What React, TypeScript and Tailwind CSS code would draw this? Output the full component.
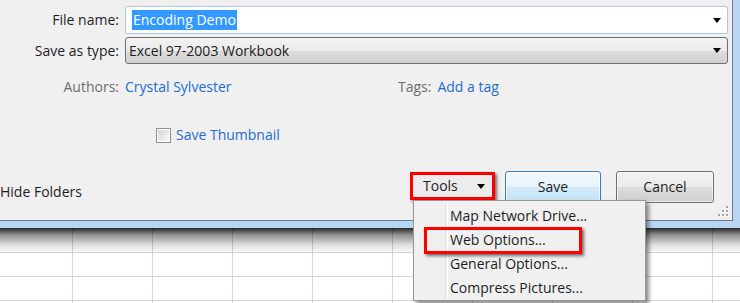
import React from "react";

const font = "font-['Open_Sans','Noto_Sans',sans-serif]";

function Arrow({ className = "" }: { className?: string }) {
  return (
    <svg width="8" height="5" viewBox="0 0 8 5" className={className}>
      <path d="M0 0h8L4 5z" fill="#000" />
    </svg>
  );
}

function Grip() {
  const dots = [
    [8, 0],
    [4, 4],
    [8, 4],
    [0, 8],
    [4, 8],
    [8, 8],
  ];
  return (
    <svg width="11" height="11" viewBox="0 0 11 11">
      {dots.map(([x, y], i) => (
        <g key={i}>
          <rect x={x + 1} y={y + 1} width="2" height="2" fill="#fff" />
          <rect x={x} y={y} width="2" height="2" fill="#a5a5a5" />
        </g>
      ))}
    </svg>
  );
}

const cols = [73, 80, 80, 80, 80, 80, 80, 80, 80, 80];
const rows = [25, 24, 24, 24];

export default function App() {
  return (
    <div className={`relative w-[740px] h-[303px] overflow-hidden bg-white text-[14px] leading-[20px] text-[#1e1e1e] ${font}`}>
      {/* Dialog */}
      <div className="h-[228px] bg-[#b9d7f4] pr-[7px] pb-[7px]">
        <div className="relative h-full bg-[#f0f0f0] border-r border-b border-[#6e7d8e] pt-[6px]">
          {/* file name + type */}
          <div className="grid grid-cols-[119px_603px] gap-x-[6px] gap-y-[3px]">
            <div className="flex h-[28px] items-center justify-end">File name:</div>
            <div className="flex h-[28px] items-center border border-[#abc9e6] bg-white pl-[6px] pr-[6px] rounded-[2px]">
              <span className="bg-[#3399ff] text-white px-[1px]">Encoding Demo</span>
              <Arrow className="ml-auto" />
            </div>
            <div className="flex h-[27px] items-center justify-end">Save as type:</div>
            <div className="flex h-[27px] items-center rounded-[3px] border border-[#707070] bg-[linear-gradient(#f2f2f2_0%,#ebebeb_50%,#dddddd_50%,#cfcfcf_100%)] pl-[3px] pr-[6px]">
              <span>Excel 97-2003 Workbook</span>
              <Arrow className="ml-auto" />
            </div>
          </div>

          {/* authors / tags */}
          <div className="mt-[13px] flex h-[20px] items-center">
            <div className="w-[119px] text-right text-[#6d6d6d]">Authors:</div>
            <div className="ml-[6px] w-[273px] text-[#1c6dd0]">Crystal Sylvester</div>
            <div className="text-[#6d6d6d]">Tags:</div>
            <div className="ml-[6px] text-[#1c6dd0]">Add a tag</div>
          </div>

          {/* thumbnail */}
          <div className="mt-[28px] flex h-[20px] items-center pl-[156px]">
            <div className="h-[15px] w-[15px] border border-[#8e8f8f] bg-white p-[1px]">
              <div className="h-full w-full bg-[linear-gradient(135deg,#d6d6d6,#fbfbfb)]" />
            </div>
            <span className="ml-[5px] text-[#1c6dd0]">Save Thumbnail</span>
          </div>

          {/* bottom row */}
          <div className="mt-[26px] flex items-start">
            <div className="w-[410px] mt-[11px]">Hide Folders</div>
            <div className="mt-[1px] flex h-[28px] w-[85px] items-center border-[3px] border-[#ff0000] bg-[#ececec] pl-[10px] pr-[7px] shadow-[2px_2px_3px_rgba(0,0,0,0.55)]">
              <span>Tools</span>
              <Arrow className="ml-auto" />
            </div>
            <div className="ml-[10px] flex h-[32px] w-[96px] items-center justify-center rounded-[3px] border border-[#3c7fb1] bg-[linear-gradient(#f1f8fd_0%,#e6f3fb_50%,#d3eaf8_50%,#c3e2f6_100%)] shadow-[inset_0_0_0_1px_rgba(255,255,255,0.7)]">
              Save
            </div>
            <div className="ml-[15px] flex h-[32px] w-[98px] items-center justify-center rounded-[3px] border border-[#707070] bg-[linear-gradient(#f2f2f2_0%,#ebebeb_50%,#dddddd_50%,#cfcfcf_100%)] shadow-[inset_0_0_0_1px_rgba(255,255,255,0.6)]">
              Cancel
            </div>
          </div>

          <div className="absolute right-[3px] bottom-[3px]">
            <Grip />
          </div>
        </div>
      </div>

      {/* Spreadsheet behind */}
      <div className="flex flex-col">
        {rows.map((h, r) => (
          <div key={r} className="flex" style={{ height: h }}>
            {cols.map((w, c) => (
              <div key={c} className="shrink-0 border-r border-b border-[#d0d7e5]" style={{ width: w }} />
            ))}
          </div>
        ))}
      </div>

      {/* dialog shadow */}
      <div className="absolute left-0 top-[228px] h-[26px] w-full bg-[linear-gradient(rgba(0,0,0,0.85),rgba(0,0,0,0.45)_25%,rgba(0,0,0,0.12)_65%,rgba(0,0,0,0))]" />

      {/* Tools menu */}
      <div className="absolute left-[413px] top-[200px] h-[101px] w-[233px] border border-[#979797] bg-[#f0f0f0] pt-[3px] shadow-[3px_3px_4px_rgba(0,0,0,0.45)]">
        <div className="absolute left-[31px] top-[2px] bottom-[2px] w-[2px] border-l border-[#e2e3e3] shadow-[1px_0_0_#ffffff]" />
        {["Map Network Drive...", "Web Options...", "General Options...", "Compress Pictures..."].map((t) => (
          <div key={t} className="flex h-[24px] items-center pl-[36px]">
            {t}
          </div>
        ))}
        <div className="absolute left-[10px] top-[26px] h-[27px] w-[158px] border-[3px] border-[#ff0000] shadow-[2px_2px_3px_rgba(0,0,0,0.55)]" />
      </div>
    </div>
  );
}
